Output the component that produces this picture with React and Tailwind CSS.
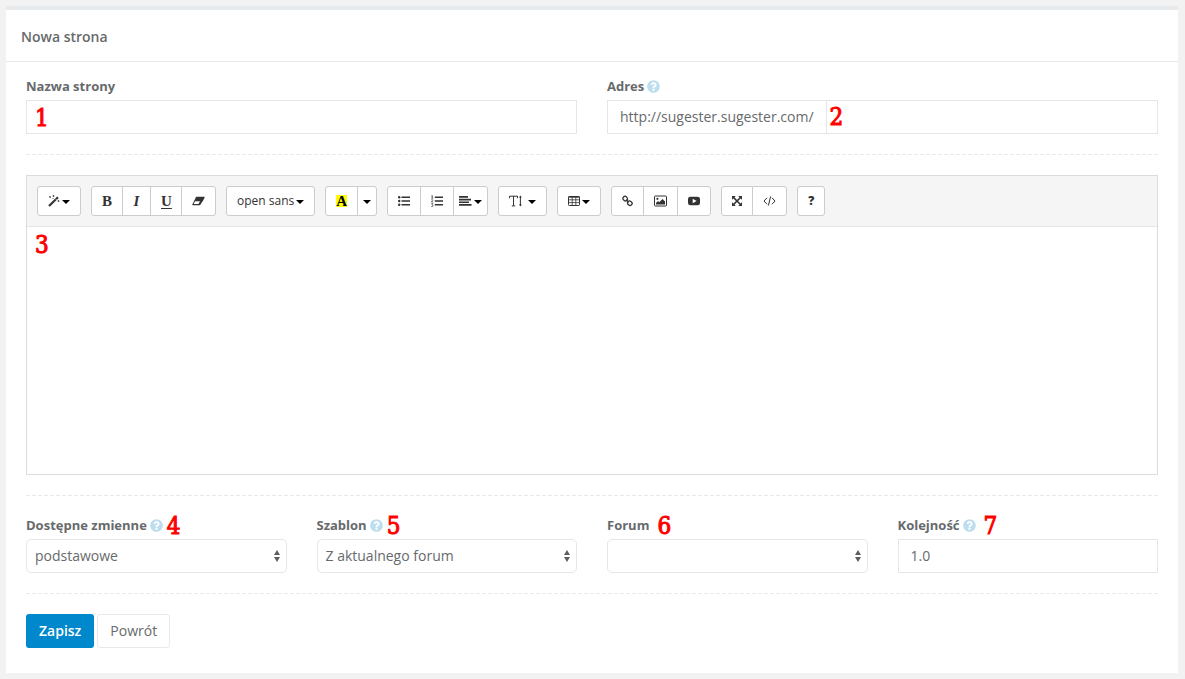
import React, { useState } from 'react';
import { FaQuestionCircle } from 'react-icons/fa';

const TEMPLATES = ['Z aktualnego forum', 'Domyślny'];
const VARIABLES = ['podstawowe', 'rozszerzone'];

const Caret = () => (
  <svg width="8" height="4" viewBox="0 0 8 4" className="mt-0.5 shrink-0 fill-black"><path d="M0 0h8L4 4z" /></svg>
);

const MagicIcon = () => (
  <svg width="12" height="12" viewBox="0 0 12 12" fill="none" stroke="currentColor">
    <path d="M1 11L10 2.200" strokeWidth="2.200" />
    <path d="M7.300 3.600l1.300 1.300" stroke="white" strokeWidth=".6" />
    <path d="M2 1v2M1 2h2M5.500 0v2M4.500 1h2M10.500 5v2M9.500 6h2M4.500 3.500h1" strokeWidth=".7" />
  </svg>
);

const EraserIcon = () => (
  <svg width="13" height="12" viewBox="0 0 13 12" fill="currentColor">
    <path d="M4.800 1.800h7.200q.9 0 .6.800L11.300 5.300 8.300 9.700q-.4.500-1 .5H1q-1 0-.6-.9L4 2.300q.3-.5.800-.5z" />
    <path d="M3.100 6.300h4.900L6.500 9.100H1.500z" fill="white" />
  </svg>
);

const ListIcon = () => (
  <svg width="12" height="12" viewBox="0 0 12 12" fill="currentColor">
    <path d="M3.500 1.500H12v1.600H3.500zM3.500 5.200H12v1.600H3.500zM3.500 8.900H12v1.600H3.500z" />
    <circle cx="1.200" cy="2.300" r="1.200" /><circle cx="1.200" cy="6" r="1.200" /><circle cx="1.200" cy="9.700" r="1.200" />
  </svg>
);

const OrderedIcon = () => (
  <svg width="12" height="12" viewBox="0 0 12 12" fill="currentColor">
    <path d="M3.800 1.500H12v1.600H3.800zM3.800 5.200H12v1.600H3.800zM3.800 8.900H12v1.600H3.800z" />
    <path d="M.3 1L1.300.4v2.700M.2 3.100h2.100M.3 4.900c.8-.8 1.800-.2 1.400.6L.4 7h1.800M.3 8.600h1.600L1 9.700c1.400.1 1.300 1.900 0 1.900H.2" fill="none" stroke="currentColor" strokeWidth=".7" />
  </svg>
);

const AlignIcon = () => (
  <svg width="13" height="12" viewBox="0 0 13 12" fill="currentColor">
    <path d="M0 1h9v1.700H0zM0 3.700h12v1.700H0zM0 6.400h10v1.700H0zM0 9.100h12.500v1.700H0z" />
  </svg>
);

const HeightIcon = () => (
  <svg width="13" height="12" viewBox="0 0 13 12" fill="none" stroke="currentColor">
    <path d="M.5 3.200V1.200h8v2M4.500 1.200v9.500M2.800 10.900h3.400" strokeWidth="1" />
    <path d="M11.400 2v8" strokeWidth="1" />
    <path d="M11.400.4l1.500 2H9.900zM11.400 11.600l1.500-2H9.900z" fill="currentColor" stroke="none" />
  </svg>
);

const TableIcon = () => (
  <svg width="12" height="12" viewBox="0 0 12 12" fill="none" stroke="currentColor">
    <rect x=".5" y="1.500" width="11" height="9" rx=".8" />
    <path d="M.5 2h11" strokeWidth="1.400" />
    <path d="M.5 4.800h11M.5 7.600h11M4.200 1.500v9M7.800 1.500v9" strokeWidth=".8" />
  </svg>
);

const LinkIcon = () => (
  <svg width="11" height="12" viewBox="0 0 11 12" fill="none" stroke="currentColor" strokeWidth="1.300">
    <rect x=".9" y="1.600" width="4.600" height="4" rx="1.700" transform="rotate(45 3.200 3.600)" />
    <rect x="5.500" y="6.200" width="4.600" height="4" rx="1.700" transform="rotate(45 7.800 8.200)" />
    <path d="M4.300 4.700l2.500 2.500" />
  </svg>
);

const ImageIcon = () => (
  <svg width="13" height="12" viewBox="0 0 13 12" fill="currentColor">
    <rect x=".5" y="1" width="12" height="10" rx=".8" fill="none" stroke="currentColor" />
    <circle cx="3.400" cy="3.800" r="1.100" />
    <path d="M2 9.500V8l2-2 1.200 1.200L8.500 4 11 6.500v3z" />
  </svg>
);

const VideoIcon = () => (
  <svg width="12" height="12" viewBox="0 0 12 12" fill="currentColor">
    <path fillRule="evenodd" d="M2.500 1.700h7Q12 1.700 12 4v4q0 2.300-2.500 2.300h-7Q0 10.300 0 8V4q0-2.300 2.500-2.300zM4.700 3.700v4.600L8.600 6z" />
  </svg>
);

const FullscreenIcon = () => (
  <svg width="10" height="12" viewBox="0 0 10 12" fill="currentColor">
    <path d="M0 1h3.800L0 4.800zM10 1v3.800L6.200 1zM0 11V7.200L3.800 11zM10 11H6.200L10 7.200z" />
    <path d="M1.500 2.500l7 7M8.500 2.500l-7 7" stroke="currentColor" strokeWidth="1.700" />
  </svg>
);

const CodeIcon = () => (
  <svg width="13" height="12" viewBox="0 0 13 12" fill="none" stroke="currentColor" strokeWidth="1">
    <path d="M4 2.800L1 6l3 3.200M9 2.800L12 6 9 9.200M7.600 1.500l-2.200 9" />
  </svg>
);

const ToolGroup = ({ children }) => (
  <div className="flex -space-x-px [&>button:first-child]:rounded-l-[3px] [&>button:last-child]:rounded-r-[3px]">{children}</div>
);

const ToolButton = ({ label, tight, children }) => (
  <button
    type="button"
    aria-label={label}
    className={`flex h-[30px] items-center gap-0.5 border border-[#ccc] bg-white text-xs text-[#333] hover:bg-gray-100 ${tight ? 'px-[5px]' : 'px-[10px]'}`}
  >
    {children}
  </button>
);

const Glyph = ({ children, className = '' }) => (
  <span className={`text-center font-['Liberation_Serif',serif] text-[15px] leading-3 ${className}`}>{children}</span>
);

const Marker = ({ children, className = '' }) => (
  <span className={`font-['DejaVu_Serif_Condensed','DejaVu_Serif',serif] text-2xl leading-none text-[#ff0000] [-webkit-text-stroke:1px_#ff0000] ${className}`}>{children}</span>
);

const FieldLabel = ({ htmlFor, text, help, marker, wide }) => (
  <div className="mb-[5px] flex h-[18px] items-center gap-[3px]">
    <label htmlFor={htmlFor} className="pt-0.5 text-[13px] font-bold">{text}</label>
    {help && <FaQuestionCircle size={13} className="text-[#bcdeee]" />}
    {marker && <Marker className={wide ? 'ml-[5px] pt-0.5' : 'ml-px pt-0.5'}>{marker}</Marker>}
  </div>
);

const SelectField = ({ id, value, onChange, options }) => (
  <div className="relative">
    <select
      id={id}
      value={value}
      onChange={(e) => onChange(e.target.value)}
      className="block h-[34px] w-full appearance-none rounded-[5px] border border-[#e5e6e7] bg-white pl-2 pr-6 text-sm outline-none"
    >
      {options.map(o => <option key={o} value={o}>{o}</option>)}
    </select>
    <svg width="6" height="12" viewBox="0 0 6 12" className="pointer-events-none absolute right-[7px] top-[11px] fill-[#5c5e60]">
      <path d="M3 0l3 5H0zM0 7h6l-3 5z" />
    </svg>
  </div>
);

const Divider = () => (
  <svg width="100%" height="1" className="my-5 block">
    <line x1="0" y1="0.5" x2="100%" y2="0.5" stroke="#e7eaec" strokeDasharray="4 2" />
  </svg>
);

export default function App() {
  const [name, setName] = useState('');
  const [address, setAddress] = useState('');
  const [variables, setVariables] = useState('podstawowe');
  const [template, setTemplate] = useState('Z aktualnego forum');
  const [forum, setForum] = useState('');
  const [order, setOrder] = useState('1.0');

  return (
    <div className="min-h-screen bg-[#f2f2f2] pb-1.5 pl-1.5 pr-[7px] pt-1.5 font-['Open_Sans',sans-serif] text-[#676a6c]">
      <form className="border-t-4 border-[#e7eaec] bg-white" onSubmit={(e) => e.preventDefault()}>
        <div className="flex h-[52px] items-center border-b border-[#e7eaec] px-[15px] pt-0.5">
          <h1 className="text-sm font-semibold">Nowa strona</h1>
        </div>

        <div className="px-5 pb-[25px] pt-[15px]">
          <div className="grid grid-cols-2 gap-[30px]">
            <div>
              <FieldLabel htmlFor="name" text="Nazwa strony" />
              <div className="relative">
                <input id="name" type="text" value={name} onChange={(e) => setName(e.target.value)} className="block h-[34px] w-full border border-[#e5e6e7] px-3 text-sm outline-none" />
                <Marker className="pointer-events-none absolute left-[9px] top-1.5">1</Marker>
              </div>
            </div>
            <div>
              <FieldLabel htmlFor="address" text="Adres" help />
              <div className="flex h-[34px] border border-[#e5e6e7]">
                <span className="flex items-center border-r border-[#e5e6e7] px-3 text-sm">http://sugester.sugester.com/</span>
                <div className="relative flex-1">
                  <input id="address" type="text" value={address} onChange={(e) => setAddress(e.target.value)} className="block h-full w-full px-3 text-sm outline-none" />
                  <Marker className="pointer-events-none absolute left-[3px] top-1">2</Marker>
                </div>
              </div>
            </div>
          </div>

          <Divider />

          <div className="border border-[#dcdcdc]">
            <div className="flex flex-wrap gap-[10px] border-b border-[#e5e5e5] bg-[#f5f5f5] p-[10px]">
              <ToolGroup>
                <ToolButton label="Styl"><MagicIcon /><Caret /></ToolButton>
              </ToolGroup>
              <ToolGroup>
                <ToolButton label="Pogrubienie"><Glyph className="w-[10px] font-bold">B</Glyph></ToolButton>
                <ToolButton label="Kursywa"><Glyph className="w-[7px] font-bold italic">I</Glyph></ToolButton>
                <ToolButton label="Podkreślenie"><Glyph className="w-[10px] font-bold underline underline-offset-2">U</Glyph></ToolButton>
                <ToolButton label="Usuń formatowanie"><EraserIcon /></ToolButton>
              </ToolGroup>
              <ToolGroup>
                <ToolButton label="Czcionka">open sans<Caret /></ToolButton>
              </ToolGroup>
              <ToolGroup>
                <ToolButton label="Kolor">
                  <Glyph className="w-[11px] bg-[#ffff00] font-bold text-black">A</Glyph>
                </ToolButton>
                <ToolButton label="Więcej kolorów" tight><Caret /></ToolButton>
              </ToolGroup>
              <ToolGroup>
                <ToolButton label="Lista"><ListIcon /></ToolButton>
                <ToolButton label="Lista numerowana"><OrderedIcon /></ToolButton>
                <ToolButton label="Akapit" tight><AlignIcon /><Caret /></ToolButton>
              </ToolGroup>
              <ToolGroup>
                <ToolButton label="Wysokość linii"><HeightIcon /><span className="ml-1"><Caret /></span></ToolButton>
              </ToolGroup>
              <ToolGroup>
                <ToolButton label="Tabela"><TableIcon /><Caret /></ToolButton>
              </ToolGroup>
              <ToolGroup>
                <ToolButton label="Link"><LinkIcon /></ToolButton>
                <ToolButton label="Obraz"><ImageIcon /></ToolButton>
                <ToolButton label="Wideo"><VideoIcon /></ToolButton>
              </ToolGroup>
              <ToolGroup>
                <ToolButton label="Pełny ekran"><FullscreenIcon /></ToolButton>
                <ToolButton label="Kod źródłowy"><CodeIcon /></ToolButton>
              </ToolGroup>
              <ToolGroup>
                <ToolButton label="Pomoc"><span className="font-extrabold">?</span></ToolButton>
              </ToolGroup>
            </div>
            <div contentEditable suppressContentEditableWarning role="textbox" aria-label="Treść" className="h-[247px] px-2 py-1.5 outline-none">
              <Marker className="block">3</Marker>
            </div>
          </div>

          <Divider />

          <div className="grid grid-cols-4 gap-[30px]">
            <div>
              <FieldLabel htmlFor="variables" text="Dostępne zmienne" help marker="4" />
              <SelectField id="variables" value={variables} onChange={setVariables} options={VARIABLES} />
            </div>
            <div>
              <FieldLabel htmlFor="template" text="Szablon" help marker="5" />
              <SelectField id="template" value={template} onChange={setTemplate} options={TEMPLATES} />
            </div>
            <div>
              <FieldLabel htmlFor="forum" text="Forum" marker="6" wide />
              <SelectField id="forum" value={forum} onChange={setForum} options={['']} />
            </div>
            <div>
              <FieldLabel htmlFor="order" text="Kolejność" help marker="7" wide />
              <input id="order" type="text" value={order} onChange={(e) => setOrder(e.target.value)} className="block h-[34px] w-full border border-[#e5e6e7] px-3 pb-0.5 text-sm outline-none" />
            </div>
          </div>

          <Divider />

          <div className="flex gap-[3px]">
            <button type="submit" className="h-[34px] rounded-[3px] bg-[#0088cc] px-[13px] text-sm font-semibold text-white">Zapisz</button>
            <button type="button" className="h-[34px] rounded-[3px] border border-[#e7eaec] bg-white px-3 text-sm">Powrót</button>
          </div>
        </div>
      </form>
    </div>
  );
}
